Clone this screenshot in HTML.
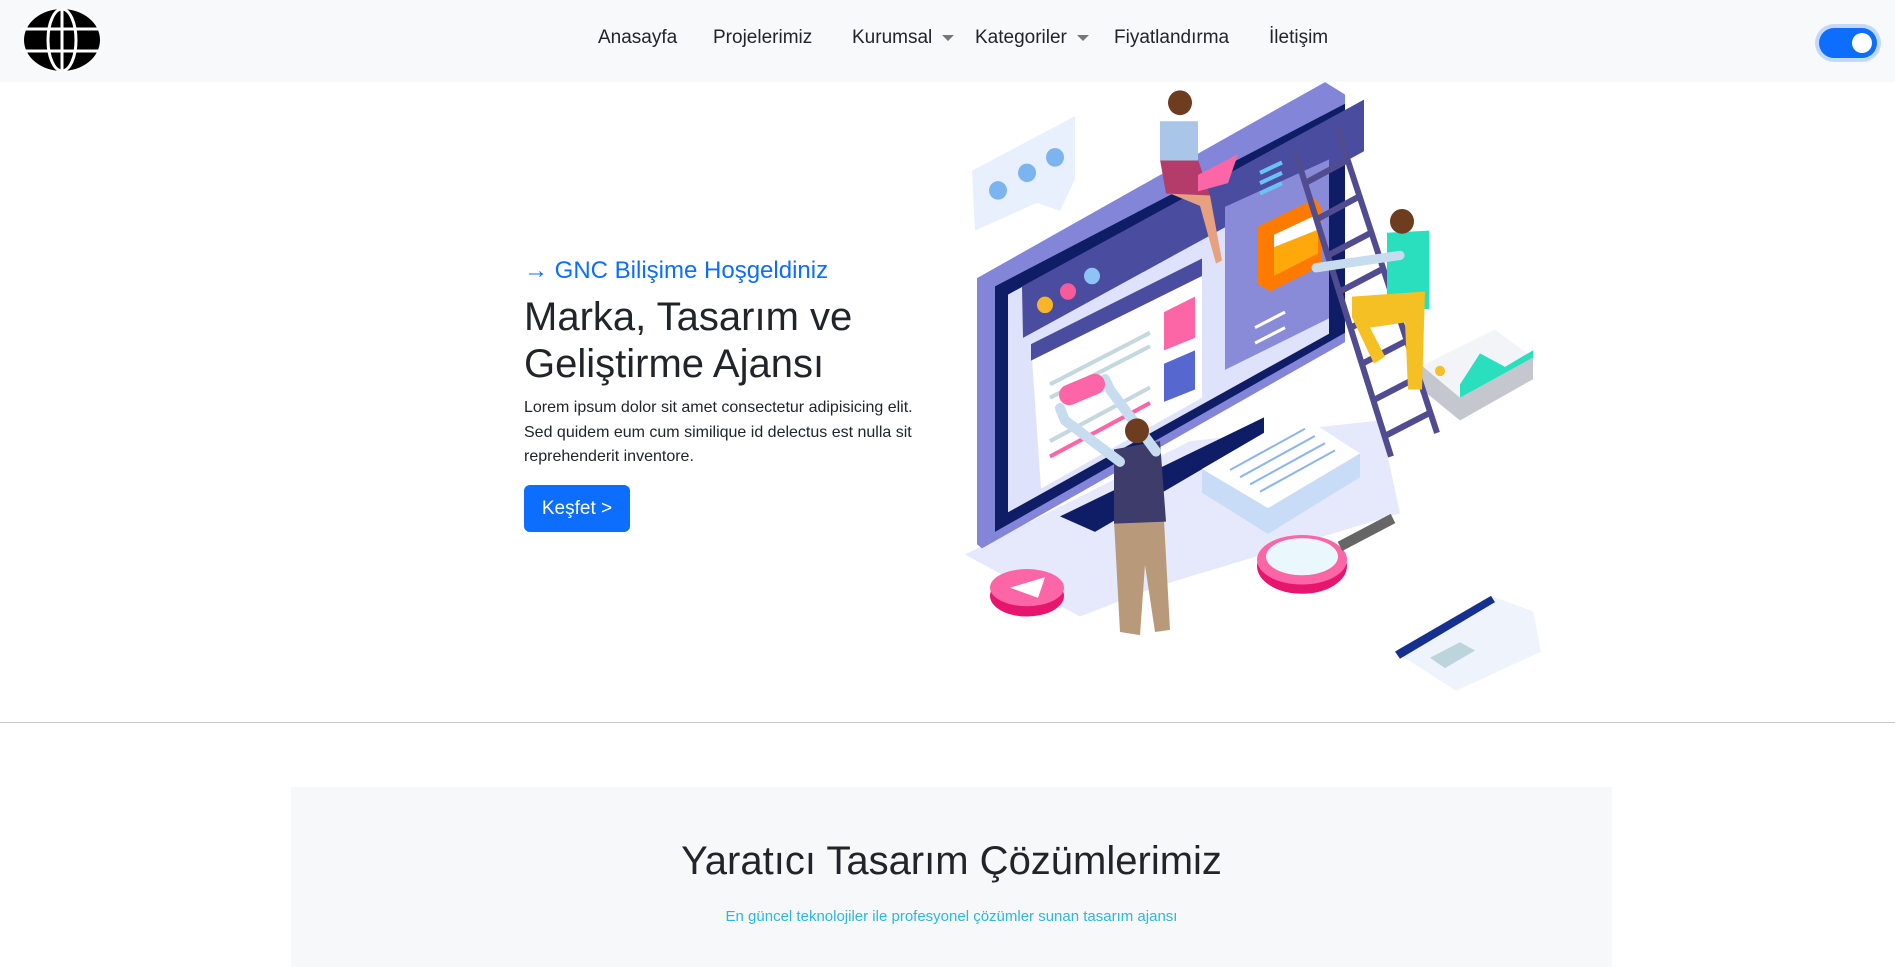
<!DOCTYPE html>
<html><head><meta charset="utf-8"><style>
*{margin:0;padding:0;box-sizing:border-box}
body{width:1895px;height:959px;overflow:hidden;background:#fff;font-family:"Liberation Sans",sans-serif;color:#212529;position:relative}
nav{position:absolute;left:0;top:0;width:1895px;height:82px;background:#f8f9fa}
.menu{position:absolute;top:27px;left:598px;font-size:19px;color:#212529;white-space:nowrap}
.menu span{position:absolute;top:0}
.caret{display:inline-block;border-left:6px solid transparent;border-right:6px solid transparent;border-top:6px solid #777;vertical-align:middle;margin-left:10px}
.toggle{position:absolute;left:1819px;top:28px;width:58px;height:30px;border-radius:15px;background:#0d6efd;box-shadow:0 0 0 4px #c2d9fd}
.toggle:after{content:"";position:absolute;right:5px;top:5px;width:20px;height:20px;border-radius:50%;background:#fff}
.h6{position:absolute;left:524px;top:257px;font-size:24px;color:#0d6efd}
h1{position:absolute;left:524px;top:294px;font-size:40px;line-height:47px;font-weight:500;color:#212529}
p.l{position:absolute;left:524px;top:396px;font-size:16px;line-height:24.5px;width:420px}
.btn{position:absolute;left:524px;top:485px;width:106px;height:47px;border-radius:6px;background:#0d6efd;color:#fff;font-size:19px;line-height:47px;text-align:center}
hr{position:absolute;left:0;top:722px;width:1895px;border:0;border-top:1px solid #ccc}
.box{position:absolute;left:291px;top:787px;width:1321px;height:180px;background:#f7f8f9}
.box h2{position:absolute;top:52px;width:100%;text-align:center;font-size:40px;font-weight:500}
.box p{position:absolute;top:121px;width:100%;text-align:center;font-size:15px;color:#2bb7e0}
</style></head><body>
<nav>
<svg style="position:absolute;left:22px;top:8px" width="80" height="64" viewBox="0 0 80 64">
<ellipse cx="40" cy="32" rx="38" ry="31" fill="#000"/>
<g stroke="#fff" stroke-width="3" fill="none">
<ellipse cx="40" cy="32" rx="14" ry="31"/>
<line x1="40" y1="0" x2="40" y2="64"/>
<line x1="0" y1="21" x2="80" y2="21"/><line x1="0" y1="43" x2="80" y2="43"/>
</g></svg>
<div class="menu">
<span style="left:0">Anasayfa</span>
<span style="left:115px">Projelerimiz</span>
<span style="left:254px">Kurumsal<i class="caret"></i></span>
<span style="left:377px">Kategoriler<i class="caret"></i></span>
<span style="left:516px">Fiyatlandırma</span>
<span style="left:671px">İletişim</span>
</div>
<div class="toggle"></div>
</nav>
<div class="h6">→ GNC Bilişime Hoşgeldiniz</div>
<h1>Marka, Tasarım ve<br>Geliştirme Ajansı</h1>
<p class="l">Lorem ipsum dolor sit amet consectetur adipisicing elit. Sed quidem eum cum similique id delectus est nulla sit reprehenderit inventore.</p>
<div class="btn">Keşfet &gt;</div>
<svg style="position:absolute;left:960px;top:80px" width="600" height="650" viewBox="0 0 600 630" preserveAspectRatio="none">
<polygon points="5,460 230,350 420,330 440,420 200,490 120,520" fill="#e6e8fc"/>
<polygon points="12,88 115,35 115,96 100,127 77,119 15,146" fill="#e8f0fd"/>
<circle cx="38" cy="107" r="9" fill="#7cb4f0"/><circle cx="67" cy="90" r="9" fill="#7cb4f0"/><circle cx="95" cy="75" r="9" fill="#7cb4f0"/>
<polygon points="17,192 365,2 385,14 385,254 22,454 17,450" fill="#8386d8"/>
<polygon points="35,200 385,23 385,245 35,438" fill="#0e1d66"/>
<polygon points="48,208 369,38 369,246 48,419" fill="#dfe2fb"/>
<polygon points="62,200 404,19 404,69 63,250" fill="#4a4ca0"/>
<polygon points="71,256 242,173 242,308 81,396" fill="#fff"/>
<polygon points="71,256 242,173 242,190 71,272" fill="#4a4ca0"/>
<g stroke="#c5d8e0" stroke-width="4"><line x1="90" y1="295" x2="190" y2="245"/><line x1="90" y1="308" x2="190" y2="258"/><line x1="90" y1="350" x2="190" y2="298"/></g>
<line x1="90" y1="365" x2="190" y2="313" stroke="#fc65a6" stroke-width="4"/>
<polygon points="204,225 235,210 235,250 204,262" fill="#fc65a6"/>
<polygon points="204,275 235,262 235,300 204,312" fill="#5667d0"/>
<polygon points="265,123 369,77 369,231 265,281" fill="#8a8bd8"/>
<g stroke="#6ac3f5" stroke-width="4"><line x1="300" y1="90" x2="322" y2="80"/><line x1="300" y1="100" x2="322" y2="90"/><line x1="300" y1="110" x2="322" y2="100"/></g>
<g stroke="#fff" stroke-width="3"><line x1="295" y1="240" x2="325" y2="225"/><line x1="295" y1="255" x2="325" y2="240"/></g>
<circle cx="85" cy="218" r="8" fill="#f9b42a"/><circle cx="108" cy="205" r="8" fill="#f65c9a"/><circle cx="132" cy="190" r="8" fill="#8dc3f5"/>
<polygon points="298,142 355,115 362,125 362,180 310,205 298,198" fill="#ff7a00"/>
<polygon points="314,150 358,130 358,168 314,190" fill="#ffa80c"/>
<polygon points="314,150 358,130 358,145 314,162" fill="#fff"/>
<polygon points="100,423 304,327 304,342 135,438" fill="#0e1d66"/>
<polygon points="242,377 338,323 400,362 308,415" fill="#fff"/>
<polygon points="242,377 308,415 400,362 400,385 308,440 242,400" fill="#c8dcf7"/>
<g stroke="#8fb6ec" stroke-width="2"><line x1="270" y1="378" x2="345" y2="338"/><line x1="280" y1="385" x2="355" y2="345"/><line x1="290" y1="392" x2="365" y2="352"/><line x1="300" y1="399" x2="375" y2="359"/></g>
<polygon points="462,277 535,242 573,269 500,308" fill="#f2f4f8"/>
<polygon points="462,277 500,308 573,269 573,290 500,330 462,300" fill="#c5c7ce"/>
<polygon points="500,295 520,265 545,278 573,262 573,269 500,308" fill="#2adfbd"/>
<circle cx="480" cy="282" r="5" fill="#f5c023"/>
<g stroke="#514c8f" stroke-width="6" fill="none">
<line x1="335" y1="69" x2="431" y2="365"/><line x1="377" y1="46" x2="477" y2="342"/>
<line x1="345" y1="100" x2="387" y2="78"/><line x1="357" y1="135" x2="399" y2="113"/><line x1="368" y1="170" x2="411" y2="148"/><line x1="380" y1="205" x2="423" y2="183"/><line x1="391" y1="240" x2="434" y2="218"/><line x1="402" y1="275" x2="446" y2="253"/><line x1="414" y1="310" x2="458" y2="288"/><line x1="425" y1="345" x2="469" y2="323"/>
</g>
<ellipse cx="342" cy="471" rx="45" ry="27" fill="#e6166e"/>
<ellipse cx="342" cy="465" rx="45" ry="24" fill="#fc65a6"/>
<ellipse cx="342" cy="462" rx="36" ry="18" fill="#eaf7fd"/>
<line x1="380" y1="452" x2="433" y2="425" stroke="#666" stroke-width="10"/>
<ellipse cx="67" cy="500" rx="37" ry="20" fill="#e6166e"/>
<ellipse cx="67" cy="492" rx="37" ry="18" fill="#fc65a6"/>
<polygon points="50,492 85,482 78,502" fill="#fff"/>
<polygon points="435,554 531,500 573,515 581,554 496,592" fill="#eef3fc"/>
<polygon points="435,554 531,500 535,506 440,561" fill="#16308f"/>
<polygon points="470,560 500,545 515,553 485,570" fill="#bcd4dc"/>
<path d="M154,427 L160,535 L180,538 L185,470 L195,535 L210,533 L204,427 Z" fill="#b89a7a"/>
<path d="M154,358 L200,350 L206,428 L154,430 Z" fill="#3e3c6a"/>
<path d="M160,370 L105,330 L100,318 M196,360 L150,300 L145,290" stroke="#c8dcf0" stroke-width="10" fill="none" stroke-linecap="round"/>
<rect x="98" y="290" width="48" height="20" rx="10" fill="#fc65a6" transform="rotate(-22 122 300)"/>
<circle cx="177" cy="340" r="12" fill="#6e3c1f"/>
<path d="M200,77 L205,100 L240,105 L250,112 L262,175 L256,178 L240,122 L210,110 Z" fill="#e8a180"/>
<path d="M200,77 L238,77 L250,112 L206,110 Z" fill="#b43c6a"/>
<path d="M200,40 L238,40 L238,78 L200,78 Z" fill="#a9c6e8"/>
<polygon points="238,92 278,72 268,100 238,108" fill="#fc65a6"/>
<circle cx="220" cy="22" r="12" fill="#6e3c1f"/>
<path d="M427,148 L469,146 L469,222 L427,222 Z" fill="#2adfbd"/>
<path d="M440,170 L370,180 L356,182" stroke="#c8dcf0" stroke-width="9" fill="none" stroke-linecap="round"/>
<path d="M392,210 L465,205 L462,300 L448,300 L445,235 L410,240 L425,268 L414,275 L392,230 Z" fill="#f5c023"/>
<circle cx="442" cy="137" r="12" fill="#6e3c1f"/>
</svg>
<hr>
<div class="box"><h2>Yaratıcı Tasarım Çözümlerimiz</h2><p>En güncel teknolojiler ile profesyonel çözümler sunan tasarım ajansı</p></div>
</body></html>
